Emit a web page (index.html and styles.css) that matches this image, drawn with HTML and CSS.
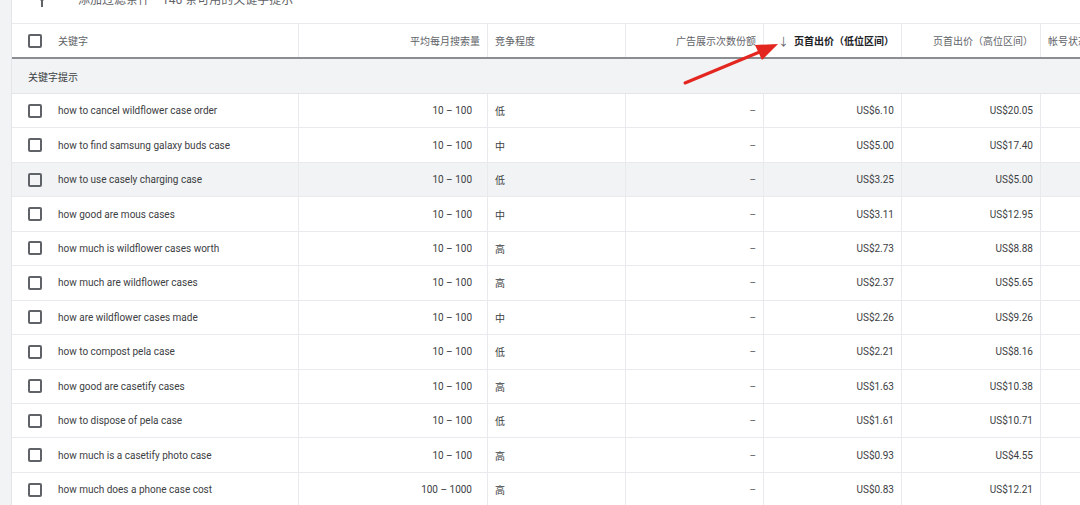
FILE: index.html
```html
<!DOCTYPE html>
<html lang="zh">
<head>
<meta charset="utf-8">
<link rel="stylesheet" href="styles.css">
</head>
<body>
<div class="page">
  <div class="panel">
    <div class="topbar">
      <svg class="filter-icon" width="12" height="12" viewBox="0 0 12 12"><path d="M0 0h12L7 6v6H5V6z" fill="#5f6368"/></svg>
      <span class="add-filter">添加过滤条件</span>
      <span class="count">146 条可用的关键字提示</span>
    </div>
    <div class="row head">
      <div class="cell kw"><span class="cb"></span>关键字</div>
      <div class="cell num">平均每月搜索量</div>
      <div class="cell txt">竞争程度</div>
      <div class="cell num">广告展示次数份额</div>
      <div class="cell num sorted"><span class="arrow">↓</span>页首出价（低位区间）</div>
      <div class="cell num">页首出价（高位区间）</div>
      <div class="cell txt">帐号状态</div>
    </div>
    <div class="group">关键字提示</div>
    <div class="body">
      <div class="row"><div class="cell kw"><span class="cb"></span>how to cancel wildflower case order</div><div class="cell num vol">10 – 100</div><div class="cell txt">低</div><div class="cell num dash">–</div><div class="cell num">US$6.10</div><div class="cell num">US$20.05</div><div class="cell"></div></div>
      <div class="row"><div class="cell kw"><span class="cb"></span>how to find samsung galaxy buds case</div><div class="cell num vol">10 – 100</div><div class="cell txt">中</div><div class="cell num dash">–</div><div class="cell num">US$5.00</div><div class="cell num">US$17.40</div><div class="cell"></div></div>
      <div class="row hover"><div class="cell kw"><span class="cb"></span>how to use casely charging case</div><div class="cell num vol">10 – 100</div><div class="cell txt">低</div><div class="cell num dash">–</div><div class="cell num">US$3.25</div><div class="cell num">US$5.00</div><div class="cell"></div></div>
      <div class="row"><div class="cell kw"><span class="cb"></span>how good are mous cases</div><div class="cell num vol">10 – 100</div><div class="cell txt">中</div><div class="cell num dash">–</div><div class="cell num">US$3.11</div><div class="cell num">US$12.95</div><div class="cell"></div></div>
      <div class="row"><div class="cell kw"><span class="cb"></span>how much is wildflower cases worth</div><div class="cell num vol">10 – 100</div><div class="cell txt">高</div><div class="cell num dash">–</div><div class="cell num">US$2.73</div><div class="cell num">US$8.88</div><div class="cell"></div></div>
      <div class="row"><div class="cell kw"><span class="cb"></span>how much are wildflower cases</div><div class="cell num vol">10 – 100</div><div class="cell txt">高</div><div class="cell num dash">–</div><div class="cell num">US$2.37</div><div class="cell num">US$5.65</div><div class="cell"></div></div>
      <div class="row"><div class="cell kw"><span class="cb"></span>how are wildflower cases made</div><div class="cell num vol">10 – 100</div><div class="cell txt">中</div><div class="cell num dash">–</div><div class="cell num">US$2.26</div><div class="cell num">US$9.26</div><div class="cell"></div></div>
      <div class="row"><div class="cell kw"><span class="cb"></span>how to compost pela case</div><div class="cell num vol">10 – 100</div><div class="cell txt">低</div><div class="cell num dash">–</div><div class="cell num">US$2.21</div><div class="cell num">US$8.16</div><div class="cell"></div></div>
      <div class="row"><div class="cell kw"><span class="cb"></span>how good are casetify cases</div><div class="cell num vol">10 – 100</div><div class="cell txt">高</div><div class="cell num dash">–</div><div class="cell num">US$1.63</div><div class="cell num">US$10.38</div><div class="cell"></div></div>
      <div class="row"><div class="cell kw"><span class="cb"></span>how to dispose of pela case</div><div class="cell num vol">10 – 100</div><div class="cell txt">低</div><div class="cell num dash">–</div><div class="cell num">US$1.61</div><div class="cell num">US$10.71</div><div class="cell"></div></div>
      <div class="row"><div class="cell kw"><span class="cb"></span>how much is a casetify photo case</div><div class="cell num vol">10 – 100</div><div class="cell txt">高</div><div class="cell num dash">–</div><div class="cell num">US$0.93</div><div class="cell num">US$4.55</div><div class="cell"></div></div>
      <div class="row"><div class="cell kw"><span class="cb"></span>how much does a phone case cost</div><div class="cell num vol">100 – 1000</div><div class="cell txt">高</div><div class="cell num dash">–</div><div class="cell num">US$0.83</div><div class="cell num">US$12.21</div><div class="cell"></div></div>
    </div>
  </div>
  <svg class="annot" width="1080" height="505" viewBox="0 0 1080 505">
    <line x1="685" y1="83" x2="762" y2="51" stroke="#e3261f" stroke-width="3" stroke-linecap="round"/>
    <polygon points="778,44 755,45 762,60" fill="#e3261f"/>
  </svg>
</div>
</body>
</html>
```

FILE: styles.css
```css
* { box-sizing: border-box; }
html, body { margin: 0; padding: 0; }
body {
  background: #f1f3f4;
  font-family: Roboto, "Noto Sans CJK SC", sans-serif;
  color: #3c4043;
  width: 1080px;
  height: 505px;
  overflow: hidden;
}
.page { position: relative; width: 1080px; height: 505px; overflow: hidden; }
.panel {
  margin-left: 11px;
  width: 1140px;
  background: #fff;
  border-left: 1px solid #e3e5e8;
}
.topbar {
  height: 24px;
  border-bottom: 1px solid #e8eaed;
  display: flex;
  align-items: flex-start;
  overflow: hidden;
  font-size: 12px;
  color: #5f6368;
}
.filter-icon { margin: -5px 0 0 24px; }
.add-filter { margin: -7px 0 0 30px; line-height: 15px; }
.count { margin: -7px 0 0 12px; line-height: 15px; }
.row {
  display: grid;
  grid-template-columns: 287px 189px 138px 138px 138px 139px 200px;
  height: 34.45px;
  border-bottom: 1px solid #e8eaed;
  font-size: 10px;
}
.row.head {
  height: 35px;
  border-bottom: 2px solid #8a8e93;
  color: #5f6368;
  font-size: 10px;
}
.row.hover { background: #f1f3f4; }
.cell {
  display: flex;
  align-items: center;
  border-right: 1px solid #e8eaed;
  padding: 0 7px;
  white-space: nowrap;
  overflow: hidden;
}
.cell.num { justify-content: flex-end; }
.cell.vol { padding-right: 15px; }
.cell.txt { padding-left: 7px; }
.cell.kw { padding-left: 16px; }
.cell.dash { color: #5f6368; }
.cb {
  width: 14px;
  height: 14px;
  border: 2px solid #5f6368;
  border-radius: 2px;
  margin-right: 16px;
  flex: none;
}
.sorted { color: #202124; font-weight: bold; }
.arrow { font-weight: normal; margin-right: 5px; font-size: 11px; color: #5f6368; }
.group {
  height: 35px;
  background: #f1f3f4;
  border-bottom: 1px solid #e3e5e8;
  display: flex;
  align-items: center;
  padding-left: 16px;
  font-size: 10px;
  color: #3c4043;
}
.annot { position: absolute; left: 0; top: 0; pointer-events: none; }
```
